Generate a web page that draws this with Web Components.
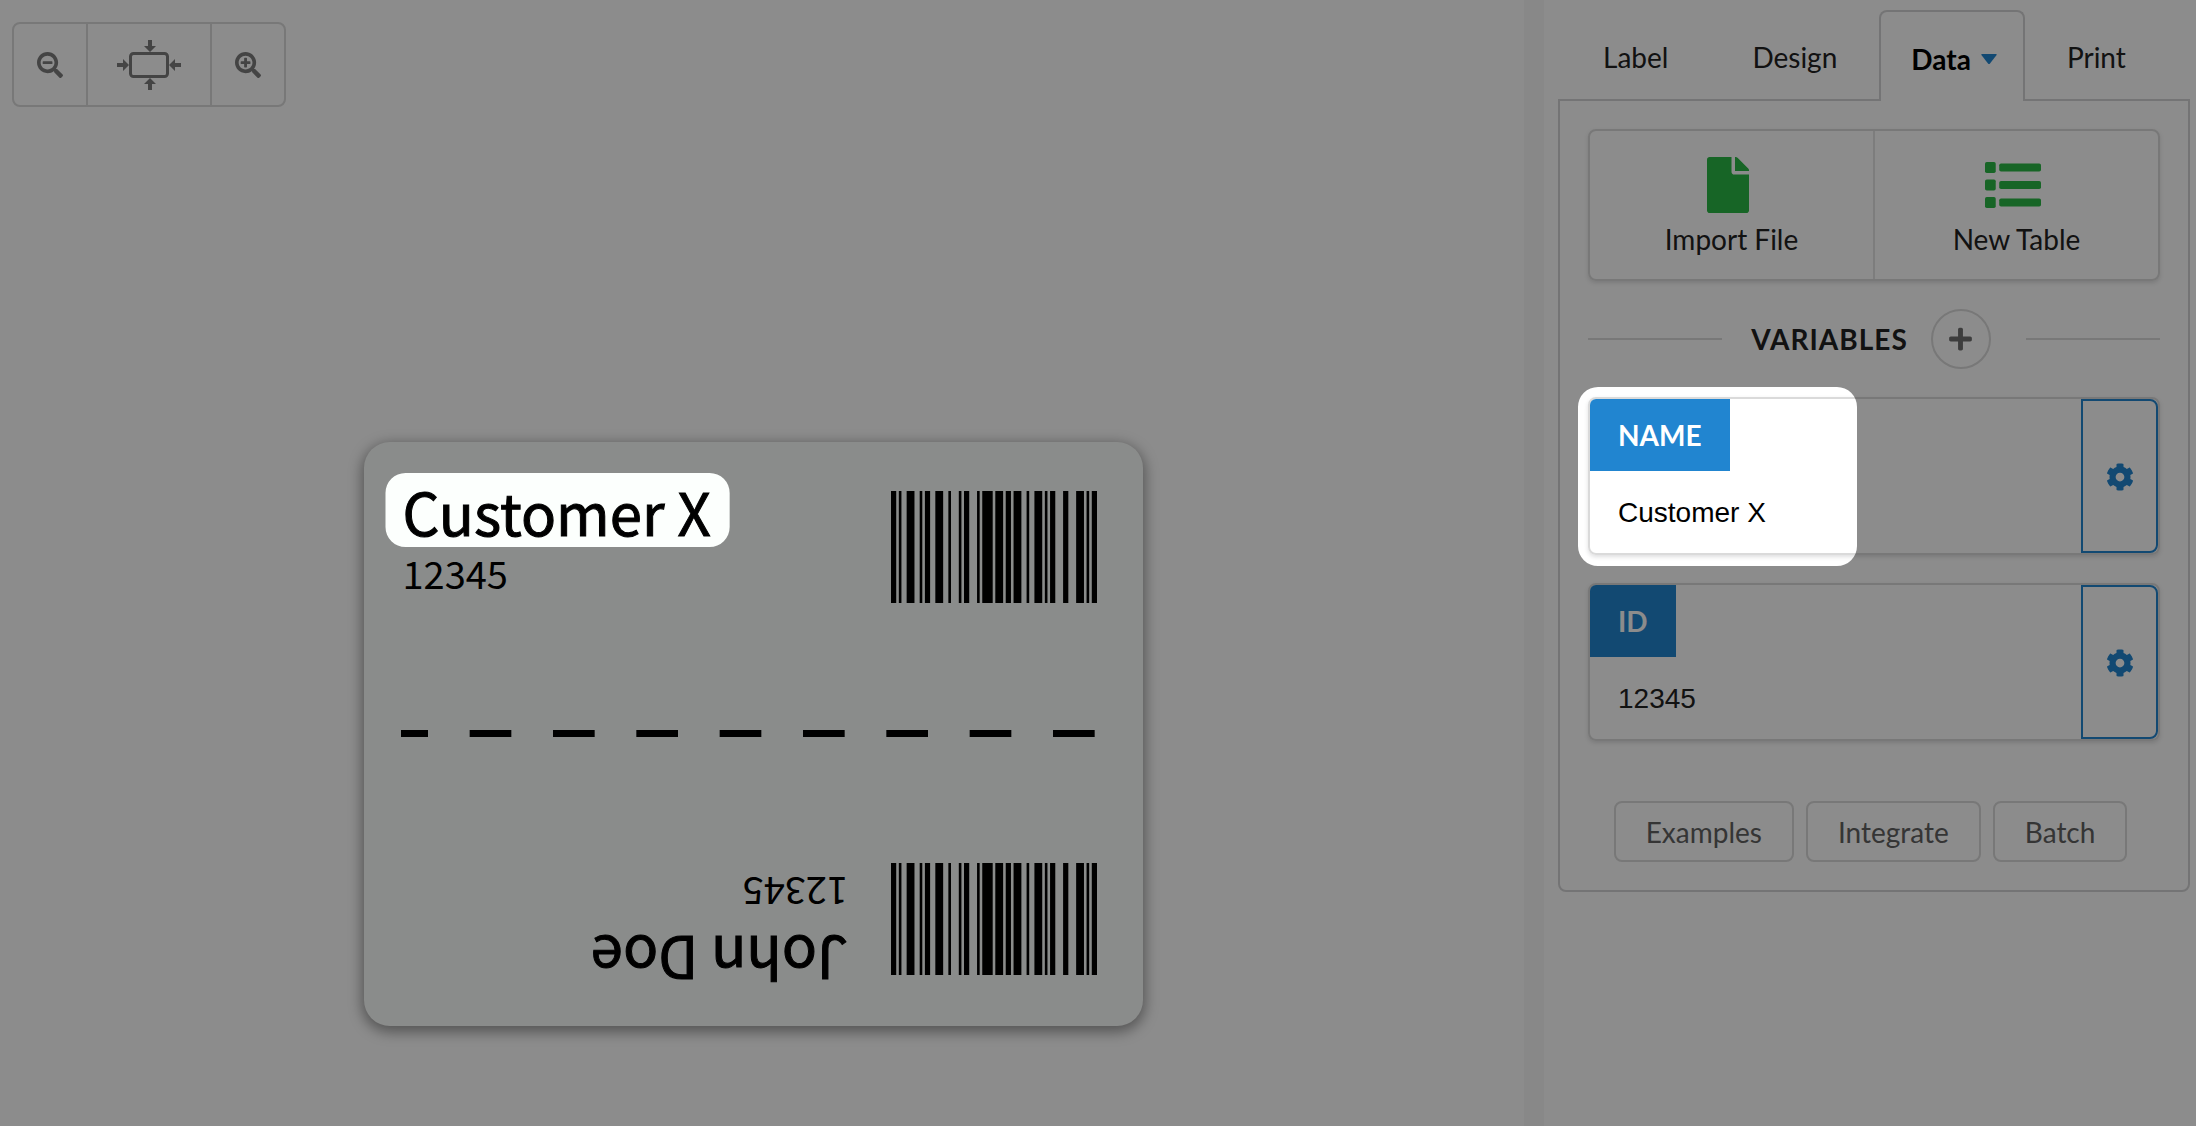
<!DOCTYPE html>
<html lang="en">
<head>
<meta charset="utf-8">
<title>Label designer</title>
<style>
  html, body { height: 100%; }
  body {
    margin: 0; background: #fff; color: #222;
    font: 28px/36px Lato, "Liberation Sans", sans-serif;
    --line: #dadada; --tab-line: #d4d4d5; --blue: #2185d0; --green: #2bb845; --muted: #7c7c7c;
    overflow: hidden;
  }
</style>
</head>
<body>
<label-app></label-app>

<script>
const ICONS = {
  zoomOut: ['0 0 512 512', '<path d="M304 192v32c0 6.6-5.4 12-12 12H124c-6.6 0-12-5.4-12-12v-32c0-6.6 5.4-12 12-12h168c6.6 0 12 5.4 12 12zm201 284.7L476.7 505c-9.4 9.4-24.6 9.4-33.9 0L343 405.3c-4.5-4.5-7-10.6-7-17V372c-35.3 27.6-79.7 44-128 44C93.1 416 0 322.9 0 208S93.1 0 208 0s208 93.1 208 208c0 48.3-16.4 92.7-44 128h16.3c6.4 0 12.5 2.5 17 7l99.7 99.7c9.3 9.4 9.3 24.6 0 34zM344 208c0-75.2-60.8-136-136-136S72 132.8 72 208s60.8 136 136 136 136-60.8 136-136z"/>'],
  zoomIn: ['0 0 512 512', '<path d="M304 192v32c0 6.6-5.4 12-12 12h-56v56c0 6.6-5.4 12-12 12h-32c-6.6 0-12-5.4-12-12v-56h-56c-6.6 0-12-5.4-12-12v-32c0-6.6 5.4-12 12-12h56v-56c0-6.6 5.4-12 12-12h32c6.6 0 12 5.4 12 12v56h56c6.6 0 12 5.4 12 12zm201 284.7L476.7 505c-9.4 9.4-24.6 9.4-33.9 0L343 405.3c-4.5-4.5-7-10.6-7-17V372c-35.3 27.6-79.7 44-128 44C93.1 416 0 322.9 0 208S93.1 0 208 0s208 93.1 208 208c0 48.3-16.4 92.7-44 128h16.3c6.4 0 12.5 2.5 17 7l99.7 99.7c9.3 9.4 9.3 24.6 0 34zM344 208c0-75.2-60.8-136-136-136S72 132.8 72 208s60.8 136 136 136 136-60.8 136-136z"/>'],
  fit: ['0 0 64 50', '<rect x="13.5" y="13.5" width="37" height="23" rx="3" fill="none" stroke="currentColor" stroke-width="3"/><path d="M31 0h4v6h4l-6 6-6-6h4zM31 50h4v-6h4l-6-6-6 6h4zM0 23v4h6v4l6-6-6-6v4zM64 23v4h-6v4l-6-6 6-6v4z"/>'],
  file: ['0 0 384 512', '<path d="M224 136V0H24C10.7 0 0 10.7 0 24v464c0 13.3 10.7 24 24 24h336c13.3 0 24-10.7 24-24V160H248c-13.2 0-24-10.8-24-24zm160-14.1v6.1H256V0h6.1c6.4 0 12.5 2.5 17 7l97.9 98c4.5 4.5 7 10.6 7 16.9z"/>'],
  list: ['0 0 512 512', [96, 256, 416].map(y => `<rect x="0" y="${y - 50}" width="98" height="100" rx="16"/><rect x="130" y="${y - 36}" width="382" height="72" rx="16"/>`).join('')],
  plus: ['0 0 448 512', '<path d="M416 208H272V64c0-17.7-14.3-32-32-32h-32c-17.7 0-32 14.3-32 32v144H32c-17.7 0-32 14.3-32 32v32c0 17.7 14.3 32 32 32h144v144c0 17.7 14.3 32 32 32h32c17.7 0 32-14.3 32-32V304h144c17.7 0 32-14.3 32-32v-32c0-17.7-14.3-32-32-32z"/>'],
  cog: ['0 0 512 512', '<path d="M487.4 315.7l-42.6-24.6c4.3-23.2 4.3-47 0-70.2l42.6-24.6c4.9-2.8 7.1-8.6 5.5-14-11.1-35.6-30-67.8-54.7-94.6-3.8-4.1-10-5.1-14.8-2.3L380.8 110c-17.9-15.4-38.5-27.3-60.8-35.1V25.8c0-5.6-3.9-10.5-9.4-11.7-36.7-8.2-74.3-7.8-109.2 0-5.5 1.2-9.4 6.1-9.4 11.7V75c-22.2 7.9-42.8 19.8-60.8 35.1L88.7 85.5c-4.9-2.8-11-1.9-14.8 2.3-24.7 26.7-43.6 58.9-54.7 94.6-1.7 5.4.6 11.2 5.5 14L67.3 221c-4.3 23.2-4.3 47 0 70.2l-42.6 24.6c-4.9 2.8-7.1 8.6-5.5 14 11.1 35.6 30 67.8 54.7 94.6 3.8 4.1 10 5.1 14.8 2.3l42.6-24.6c17.9 15.4 38.5 27.3 60.8 35.1v49.2c0 5.6 3.9 10.5 9.4 11.7 36.7 8.2 74.3 7.8 109.2 0 5.5-1.2 9.4-6.1 9.4-11.7v-49.2c22.2-7.9 42.8-19.8 60.8-35.1l42.6 24.6c4.9 2.8 11 1.9 14.8-2.3 24.7-26.7 43.6-58.9 54.7-94.6 1.5-5.5-.7-11.3-5.6-14.1zM256 336c-44.1 0-80-35.9-80-80s35.9-80 80-80 80 35.9 80 80-35.9 80-80 80z"/>'],
  caret: ['0 0 16 10', '<path d="M1 0h14q1 0 .6 1L9 9.400q-1 1-2 0L.4 1Q0 0 1 0z"/>']
};

const BASE = `
  * { box-sizing: border-box; }
  button, input { font: inherit; color: inherit; margin: 0; background: none; border: 0; padding: 0; }
  button { cursor: pointer; }
`;

function define(name, html, setup) {
  const template = document.createElement('template');
  template.innerHTML = html;
  customElements.define(name, class extends HTMLElement {
    constructor() {
      super();
      this.attachShadow({ mode: 'open' }).append(template.content.cloneNode(true));
    }
    connectedCallback() { if (setup) setup(this, this.shadowRoot); }
  });
}

define('ui-icon', `<style>:host{display:block;flex:none} svg{display:block;width:100%;height:100%;fill:currentColor}</style>`,
  (host, root) => {
    const [box, body] = ICONS[host.getAttribute('name')];
    root.innerHTML += `<svg viewBox="${box}" aria-hidden="true">${body}</svg>`;
  });

define('zoom-bar', `<style>${BASE}
  :host { display: flex; align-self: flex-start; border: 2px solid var(--line); border-radius: 8px; color: var(--muted); }
  button { display: flex; align-items: center; justify-content: center; width: 72px; height: 81px; }
  button + button { border-left: 2px solid var(--line); width: 74px; }
  button.fit { width: 124px; }
  ui-icon { width: 26px; height: 26px; }
  .fit ui-icon { width: 64px; height: 50px; }
  </style>
  <button aria-label="Zoom out"><ui-icon name="zoomOut"></ui-icon></button>
  <button class="fit" aria-label="Fit label"><ui-icon name="fit"></ui-icon></button>
  <button aria-label="Zoom in"><ui-icon name="zoomIn"></ui-icon></button>`);

/* Code 128 bars: alternating bar and space widths, in modules. */
define('bar-code', `<style>:host{display:block;width:206px;height:112px} svg{display:block;width:100%;height:100%}</style>`,
  (host, root) => {
    let x = 0, bars = '';
    [...'2112321122321311231141312132123111232331112'].forEach((n, i) => {
      if (i % 2 === 0) bars += `<rect x="${x}" y="0" width="${n}" height="10"/>`;
      x += +n;
    });
    root.innerHTML += `<svg viewBox="0 0 ${x} 10" preserveAspectRatio="none" aria-hidden="true">${bars}</svg>`;
  });

define('label-half', `<style>
  :host { display: flex; justify-content: space-between; color: #000; font-family: "Noto Sans CJK SC", sans-serif; }
  .name { font-size: 58px; line-height: 40px; -webkit-text-stroke: 1px #000; }
  .id { font-size: 38px; line-height: 56px; margin-top: 14px; }
  .text { display: flex; flex-direction: column; align-items: flex-start; margin-left: 2px; }
  :host([flip]) .text { transform: rotate(180deg); margin: 0 0 0 190px; }
  :host([flip]) .name { line-height: 28px; }
  :host([flip]) .id { margin-top: 26px; }
  </style>
  <div class="text"><div class="name"><slot name="name"></slot></div><div class="id"><slot name="id"></slot></div></div>
  <bar-code></bar-code>`);

define('label-preview', `<style>${BASE}
  :host { display: flex; flex-direction: column; justify-content: space-between; width: 779px; height: 584px; padding: 49px 46px 51px 37px;
    background: #fcfffd; border-radius: 26px; box-shadow: 0 4px 14px 2px rgba(0,0,0,.4); }
  svg { display: block; width: 100%; height: 7px; }
  </style>
  <label-half><span slot="name" data-spot="18 19 16 17">Customer X</span><span slot="id">12345</span></label-half>
  <svg viewBox="0 0 2088 21" preserveAspectRatio="none" aria-hidden="true"><path d="M0 10.500H2088" stroke="#000" stroke-width="21" stroke-dasharray="125 125" stroke-dashoffset="44"/></svg>
  <label-half flip><span slot="name">John Doe</span><span slot="id">12345</span></label-half>`);

define('nav-tabs', `<style>${BASE}
  :host { display: flex; padding: 10px 0 0 3px; }
  button { padding: 5px 42px 0; height: 89px; }
  .active { display: flex; align-items: center; gap: 10px; padding: 4px 26px 0 30px; height: 91px; margin-bottom: -2px; position: relative; font-weight: 700; color: #000;
    border: 2px solid var(--tab-line); border-bottom: 0; border-radius: 8px 8px 0 0; background: #fff; }
  ui-icon { width: 16px; height: 10px; color: var(--blue); }
  </style>
  <button>Label</button><button>Design</button><button class="active">Data<ui-icon name="caret"></ui-icon></button><button>Print</button>`);

define('action-pair', `<style>${BASE}
  :host { display: flex; border: 2px solid var(--line); border-radius: 8px; box-shadow: 0 2px 4px rgba(34,36,38,.15); }
  button { flex: 1; display: flex; flex-direction: column; align-items: center; gap: 8px; padding: 26px 0 20px; height: 148px; }
  button + button { border-left: 2px solid #e4e4e4; }
  ui-icon { height: 56px; width: 56px; margin-right: 8px; color: var(--green); }
  </style>
  <button><ui-icon name="file"></ui-icon>Import File</button>
  <button><ui-icon name="list"></ui-icon>New Table</button>`);

define('section-head', `<style>${BASE}
  :host { display: flex; align-items: center; }
  i { flex: 1; height: 2px; background: var(--line); }
  h2 { font: inherit; font-weight: 700; letter-spacing: 1px; margin: 0 23px 0 29px; }
  button { display: flex; align-items: center; justify-content: center; width: 60px; height: 60px; margin-right: 35px; border: 2px solid var(--line); border-radius: 50%; color: #707070; }
  ui-icon { width: 23px; height: 26px; }
  </style>
  <i></i><h2><slot></slot></h2><button aria-label="Add variable"><ui-icon name="plus"></ui-icon></button><i></i>`);

define('variable-card', `<style>${BASE}
  :host { display: flex; height: 158px; border: 2px solid var(--line); border-radius: 8px; box-shadow: 0 2px 4px rgba(34,36,38,.15); }
  .field { flex: 1; display: flex; flex-direction: column; align-items: flex-start; min-width: 0; }
  label { padding: 18px 28px; background: var(--blue); color: #fff; font-weight: 700; border-radius: 6px 0 0 0; }
  input { flex: 1; width: 100%; min-height: 0; padding: 2px 28px 0; outline: 0; font-family: "Liberation Sans", Arial, sans-serif; }
  button { display: flex; align-items: center; justify-content: center; width: 77px; padding-top: 2px; border: 2px solid var(--blue); border-radius: 0 8px 8px 0; color: var(--blue); }
  ui-icon { width: 28px; height: 28px; }
  </style>
  <div class="field"><label for="v"></label><input id="v" type="text"></div>
  <button aria-label="Variable settings"><ui-icon name="cog"></ui-icon></button>`,
  (host, root) => {
    root.querySelector('label').textContent = host.getAttribute('name');
    const input = root.querySelector('input');
    input.value = host.getAttribute('value');
    if (host.hasAttribute('spotted')) {
      root.querySelector('.field').dataset.spot = '12 -224 13 12';
      input.style.color = '#000';
    }
  });

define('link-row', `<style>${BASE}
  :host { display: flex; justify-content: center; gap: 12px; padding-right: 7px; }
  button { height: 61px; padding: 0 30px; border: 2px solid var(--line); border-radius: 8px; color: #626262; }
  </style>
  <button>Examples</button><button>Integrate</button><button>Batch</button>`);

define('data-panel', `<style>${BASE}
  :host { display: flex; flex-direction: column; gap: 28px; padding: 28px; border: 2px solid var(--tab-line); border-radius: 0 0 8px 8px; }
  link-row { margin-top: 32px; }
  </style>
  <action-pair></action-pair>
  <section-head>VARIABLES</section-head>
  <variable-card name="NAME" value="Customer X" spotted></variable-card>
  <variable-card name="ID" value="12345"></variable-card>
  <link-row></link-row>`);

/* Dims the page and leaves a rounded window open over every element that carries data-spot. */
define('spot-light', `<style>
  :host { display: block; position: absolute; inset: 0; pointer-events: none; }
  svg { display: block; width: 100%; height: 100%; }
  </style><svg aria-hidden="true"><path fill="rgba(0,0,0,.45)" fill-rule="evenodd"/></svg>`,
  (host, root) => {
    const find = (node, out = []) => {
      node.querySelectorAll('*').forEach(el => {
        if (el.dataset && el.dataset.spot) out.push(el);
        if (el.shadowRoot) find(el.shadowRoot, out);
      });
      return out;
    };
    const draw = () => {
      let d = `M0 0H${innerWidth}V${innerHeight}H0Z`;
      find(document).forEach(el => {
        const [t, r, b, l] = el.dataset.spot.split(' ').map(Number);
        const box = (el.slot ? el.assignedSlot.parentElement : el).getBoundingClientRect();
        const x = box.left - l, y = box.top - t, R = 20;
        const w = box.width + l + r - 2 * R, h = box.height + t + b - 2 * R;
        d += `M${x + R} ${y}h${w}a${R} ${R} 0 0 1 ${R} ${R}v${h}a${R} ${R} 0 0 1 ${-R} ${R}h${-w}a${R} ${R} 0 0 1 ${-R} ${-R}v${-h}a${R} ${R} 0 0 1 ${R} ${-R}z`;
      });
      root.querySelector('path').setAttribute('d', d);
    };
    new ResizeObserver(draw).observe(host);
    document.fonts.ready.then(draw);
    addEventListener('load', draw);
  });

define('label-app', `<style>${BASE}
  :host { display: flex; min-height: 100vh; }
  main { flex: 1; display: flex; flex-direction: column; padding: 22px 12px 100px; min-width: 0; }
  label-preview { margin: 0 auto; }
  .stage { flex: 1; display: flex; padding: 335px 18px 0 0; align-items: flex-start; }
  .split { width: 20px; background: #f8f8f8; }
  aside { width: 652px; padding: 0 6px 0 14px; }
  </style>
  <main><zoom-bar></zoom-bar><div class="stage"><label-preview></label-preview></div></main>
  <div class="split"></div>
  <aside><nav-tabs></nav-tabs><data-panel></data-panel></aside>
  <spot-light></spot-light>`);
</script>
</body>
</html>
